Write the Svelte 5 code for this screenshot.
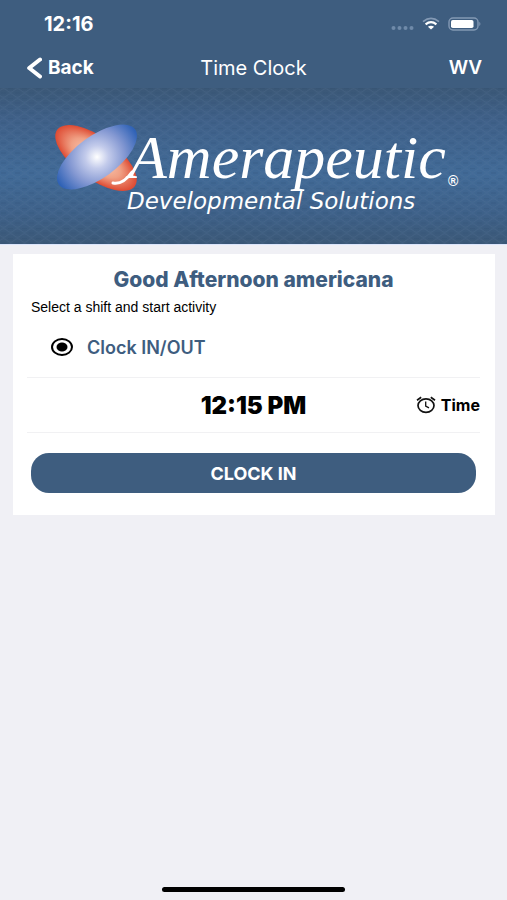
<script lang="ts">
  let statusTime = '12:16';
  let currentTime = '12:15 PM';
  let userName = 'americana';
  let activity = 'clock';
</script>

<div class="screen">
  <header>
    <div class="status-bar">
      <span class="status-time">{statusTime}</span>
      <div class="status-icons">
        <svg width="23" height="16" viewBox="0 0 23 16" aria-hidden="true">
          <g fill="#6f8aa9">
            <circle cx="2.5" cy="12" r="2" />
            <circle cx="8.5" cy="12" r="2" />
            <circle cx="14.5" cy="12" r="2" />
            <circle cx="20.5" cy="12" r="2" />
          </g>
        </svg>
        <svg width="18" height="16" viewBox="0 0 18 16" aria-hidden="true">
          <path d="M1 5.6 Q9 -0.8 17 5.6" fill="none" stroke="#8399b4" stroke-width="1.7" />
          <path d="M3.6 8.3 Q9 4 14.4 8.3" fill="none" stroke="#fff" stroke-width="2.2" />
          <path d="M5.9 10.8 Q9 8.6 12.1 10.8 L9 13.6 Z" fill="#fff" />
        </svg>
        <svg width="34" height="16" viewBox="0 0 34 16" aria-hidden="true">
          <rect x="1" y="2" width="29" height="12" rx="4" fill="none" stroke="#8399b4" stroke-width="1.4" />
          <rect x="3" y="4" width="22.5" height="8" rx="1.8" fill="#fff" />
          <path d="M31.3 5.8 Q33.6 8 31.3 10.2 Z" fill="#8399b4" />
        </svg>
      </div>
    </div>
    <nav>
      <button class="back">
        <svg width="17" height="22" viewBox="0 0 17 22" aria-hidden="true">
          <path d="M15 2.5 L4.2 11 L15 19.5" fill="none" stroke="#fff" stroke-width="4" stroke-linecap="round" stroke-linejoin="round" />
        </svg>
        Back
      </button>
      <h1>Time Clock</h1>
      <a href="#profile">WV</a>
    </nav>
  </header>

  <div class="banner">
    <svg viewBox="0 0 507 156" role="img" aria-label="Amerapeutic Developmental Solutions">
      <defs>
        <linearGradient id="bannerShade" x1="0" y1="0" x2="0" y2="1">
          <stop offset="0" stop-color="#3b5877" />
          <stop offset="0.2" stop-color="#3f6088" />
          <stop offset="0.55" stop-color="#416a97" />
          <stop offset="0.8" stop-color="#3e6189" />
          <stop offset="1" stop-color="#3b5877" />
        </linearGradient>
        <pattern id="weave" width="14" height="10" patternUnits="userSpaceOnUse">
          <path d="M0 2.5 Q3.5 -1 7 2.5 T14 2.5 M0 7.5 Q3.5 11 7 7.5 T14 7.5" fill="none" stroke="#6282a5" stroke-opacity="0.18" />
          <path d="M1 5 H6 M8 0.5 H13" stroke="#2c4868" stroke-opacity="0.18" stroke-width="1.5" />
        </pattern>
        <radialGradient id="redPetal">
          <stop offset="0" stop-color="#ffe0cc" />
          <stop offset="0.6" stop-color="#f0a084" />
          <stop offset="1" stop-color="#de4a32" />
        </radialGradient>
        <radialGradient id="bluePetal" gradientUnits="userSpaceOnUse" cx="97" cy="69" r="46">
          <stop offset="0" stop-color="#ffffff" />
          <stop offset="0.25" stop-color="#c3cbeb" />
          <stop offset="0.6" stop-color="#8498d2" />
          <stop offset="1" stop-color="#2f62b6" />
        </radialGradient>
      </defs>
      <rect width="507" height="156" fill="url(#bannerShade)" />
      <rect width="507" height="156" fill="url(#weave)" />
      <ellipse cx="96" cy="70" rx="48" ry="21" fill="url(#redPetal)" transform="rotate(36 96 70)" />
      <ellipse cx="97" cy="69" rx="47" ry="21" fill="url(#bluePetal)" transform="rotate(-36 97 69)" />
      <path d="M113 95 Q123 97 132 84" fill="none" stroke="#fff" stroke-width="3" stroke-linecap="round" />
      <text class="brand" x="129" y="90">Amerapeutic</text>
      <text class="registered" x="448" y="98">®</text>
      <text class="tagline" x="127" y="121">Developmental Solutions</text>
    </svg>
  </div>

  <main>
    <h2>Good Afternoon {userName}</h2>
    <p>Select a shift and start activity</p>
    <label class="shift">
      <input type="radio" name="activity" value="clock" bind:group={activity}>
      Clock IN/OUT
    </label>
    <div class="time-row">
      <strong>{currentTime}</strong>
      <span class="time-label">
        <svg width="20" height="18" viewBox="0 0 20 18" aria-hidden="true">
          <g fill="none" stroke="#111" stroke-width="1.7">
            <ellipse cx="10" cy="9.6" rx="8" ry="6.8" />
            <path d="M1 4.2 L5.2 1.2 M14.8 1.2 L19 4.2" />
            <path d="M9.7 5.6 V10 L13 11.9" stroke-width="1.3" />
          </g>
        </svg>
        Time
      </span>
    </div>
    <button class="clock-in">CLOCK IN</button>
  </main>

  <div class="home-indicator"></div>
</div>

<style>
:global(body) {
  margin: 0;
  background-color: #f0f0f5;
}

.screen {
  display: flex;
  flex-direction: column;
  min-height: 100vh;
  background-color: #f0f0f5;
  color: #000;
  font-family: Inter, "Liberation Sans", sans-serif;
}

header {
  background-color: #3e5d7f;
  color: #fff;
}

.status-bar {
  display: flex;
  justify-content: space-between;
  align-items: center;
  height: 47px;
  padding: 0 25px 0 44px;
}

.status-time {
  font-size: 20px;
  font-weight: 700;
}

.status-icons {
  display: flex;
  align-items: center;
  gap: 8px;
}

nav {
  display: grid;
  grid-template-columns: 1fr auto 1fr;
  align-items: center;
  height: 41px;
  padding: 0 25px;
}

.back {
  display: flex;
  align-items: center;
  gap: 6px;
  justify-self: start;
  padding: 0;
  border: none;
  background: none;
  color: #fff;
  font-family: inherit;
  font-size: 19px;
  font-weight: 700;
}

h1 {
  margin: 0;
  font-size: 20px;
  font-weight: 400;
}

nav a {
  justify-self: end;
  color: #fff;
  font-size: 19px;
  font-weight: 600;
  text-decoration: none;
}

.banner {
  border-bottom: 1px solid #dbe5fb;
}

.banner svg {
  display: block;
  width: 100%;
}

.banner text {
  fill: #fff;
}

.brand {
  font-family: "Liberation Serif", serif;
  font-size: 62px;
  font-style: italic;
}

.registered {
  font-family: "Liberation Sans", sans-serif;
  font-size: 14px;
  font-weight: 700;
}

.tagline {
  font-family: "DejaVu Sans", sans-serif;
  font-size: 23px;
  font-style: italic;
}

main {
  display: flex;
  flex-direction: column;
  margin: 9px 12px 0 13px;
  padding: 14px 15px 22px 14px;
  background-color: #fff;
}

h2 {
  margin: 0;
  color: #3e5d7f;
  font-size: 21px;
  font-weight: 800;
  line-height: 24px;
  text-align: center;
}

p {
  margin: 5px 4px 0;
  font-family: "Liberation Sans", sans-serif;
  font-size: 14px;
  line-height: 20px;
}

.shift {
  display: flex;
  align-items: center;
  gap: 14px;
  height: 60px;
  padding-left: 24px;
  color: #3e5d7f;
  font-size: 18px;
  font-weight: 600;
}

.shift input {
  appearance: none;
  width: 22px;
  height: 18px;
  margin: 0;
  border: 2px solid #000;
  border-radius: 50%;
}

.shift input:checked {
  background: radial-gradient(ellipse 6px 5px, #000 80%, transparent);
}

.time-row {
  display: grid;
  grid-template-columns: 1fr auto 1fr;
  align-items: center;
  height: 54px;
  border-top: 1px solid #f1f1f3;
  border-bottom: 1px solid #f1f1f3;
}

.time-row strong {
  grid-column: 2;
  font-size: 24px;
  font-weight: 900;
}

.time-label {
  display: flex;
  align-items: center;
  gap: 5px;
  justify-self: end;
  font-size: 16px;
  font-weight: 700;
}

.clock-in {
  height: 40px;
  margin: 20px 4px 0;
  border: none;
  border-radius: 18px;
  background-color: #3e5d7f;
  color: #fff;
  font-family: inherit;
  font-size: 18px;
  font-weight: 700;
}

.home-indicator {
  align-self: center;
  width: 36%;
  height: 5px;
  margin-top: auto;
  margin-bottom: 8px;
  border-radius: 3px;
  background-color: #000;
}
</style>
